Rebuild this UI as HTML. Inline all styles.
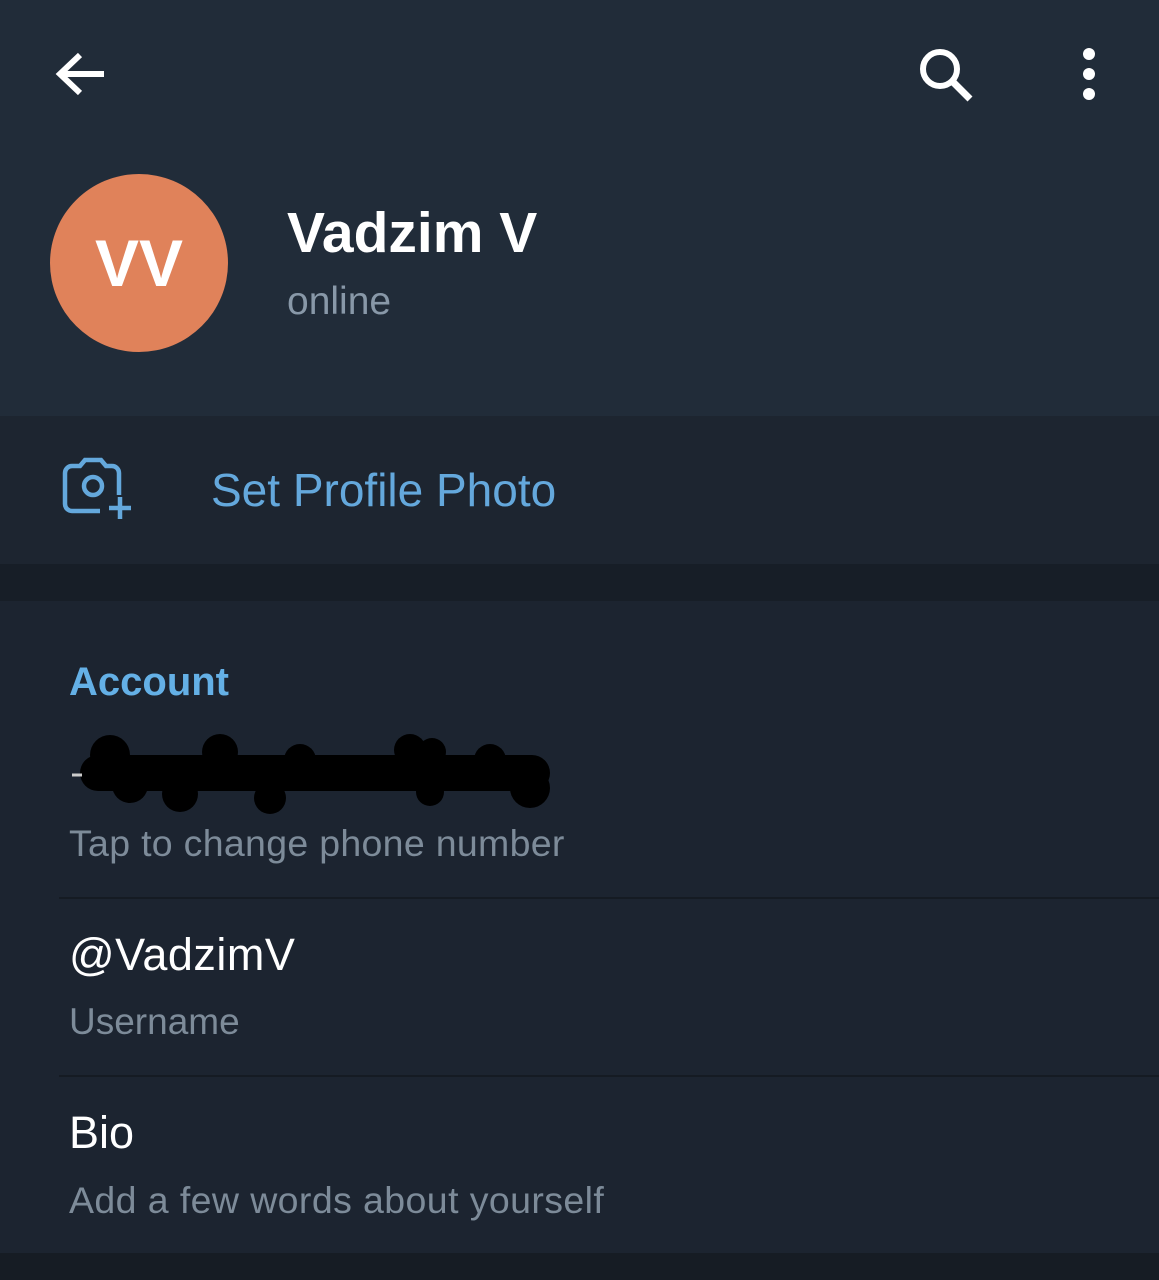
<!DOCTYPE html>
<html><head><style>
body{margin:0;width:1159px;height:1280px;background:#1c2430;font-family:"Liberation Sans",Roboto,sans-serif;position:relative;overflow:hidden}
.a{position:absolute;white-space:nowrap}
</style></head><body>
<div class="a" style="left:0;top:0;width:1159px;height:416px;background:#212c39"></div>
<svg class="a" style="left:50px;top:45px" width="64" height="60" viewBox="0 0 64 60"><path d="M54 29H12M30 10L10 29l20 19" stroke="#fff" stroke-width="6" fill="none"/></svg>
<svg class="a" style="left:915px;top:44px" width="64" height="60" viewBox="0 0 64 60"><circle cx="25" cy="25" r="17" stroke="#fff" stroke-width="6" fill="none"/><path d="M37 37l18 18" stroke="#fff" stroke-width="7"/></svg>
<svg class="a" style="left:1075px;top:48px" width="30" height="54"><circle cx="14" cy="6" r="6" fill="#fff"/><circle cx="14" cy="26" r="6" fill="#fff"/><circle cx="14" cy="46" r="6" fill="#fff"/></svg>
<div class="a" style="left:50px;top:174px;width:178px;height:178px;border-radius:50%;background:#e0825a;color:#fff;font-weight:bold;font-size:66px;line-height:178px;text-align:center">VV</div>
<div class="a" style="left:287px;top:200px;color:#fff;font-weight:bold;font-size:57px">Vadzim V</div>
<div class="a" style="left:287px;top:280px;color:#8898a8;font-size:39px">online</div>
<div class="a" style="left:0;top:416px;width:1159px;height:148px;background:#1d2530"></div>
<svg class="a" style="left:60px;top:455px" width="76" height="68" viewBox="0 0 76 68"><path d="M40 56H12a7 7 0 0 1-7-7V18a7 7 0 0 1 7-7h8l5-6h16l5 6h6a7 7 0 0 1 7 7v22" stroke="#64a8dc" stroke-width="4.5" fill="none"/><circle cx="33" cy="31" r="9" stroke="#64a8dc" stroke-width="4.5" fill="none"/><path d="M60 42v22M49 53h22" stroke="#64a8dc" stroke-width="4.5"/></svg>
<div class="a" style="left:211px;top:463px;color:#64a8dc;font-size:46px">Set Profile Photo</div>
<div class="a" style="left:0;top:564px;width:1159px;height:37px;background:#171e27"></div>
<div class="a" style="left:69px;top:660px;color:#64b0e6;font-weight:bold;font-size:40px">Account</div>
<svg class="a" style="left:70px;top:730px" width="490" height="90"><g fill="#000"><rect x="10" y="25" width="470" height="36" rx="18"/><circle cx="40" cy="25" r="20"/><circle cx="60" cy="55" r="18"/><circle cx="150" cy="22" r="18"/><circle cx="230" cy="30" r="16"/><circle cx="340" cy="20" r="16"/><circle cx="362" cy="22" r="14"/><circle cx="420" cy="30" r="16"/><circle cx="110" cy="64" r="18"/><circle cx="200" cy="68" r="16"/><circle cx="360" cy="62" r="14"/><circle cx="460" cy="58" r="20"/></g><path d="M2 45h10" stroke="#ccc" stroke-width="3"/></svg>
<div class="a" style="left:69px;top:822px;color:#7d8b99;font-size:37.5px;letter-spacing:0.3px">Tap to change phone number</div>
<div class="a" style="left:59px;top:897px;width:1100px;height:2px;background:#151b23"></div>
<div class="a" style="left:69px;top:929px;color:#fff;font-size:45px;letter-spacing:0.5px">@VadzimV</div>
<div class="a" style="left:69px;top:1001px;color:#7d8b99;font-size:37px">Username</div>
<div class="a" style="left:59px;top:1075px;width:1100px;height:2px;background:#151b23"></div>
<div class="a" style="left:69px;top:1107px;color:#fff;font-size:45px">Bio</div>
<div class="a" style="left:69px;top:1179px;color:#7d8b99;font-size:37.5px;letter-spacing:0.4px">Add a few words about yourself</div>
<div class="a" style="left:0;top:1253px;width:1159px;height:27px;background:#161c24"></div>
</body></html>
